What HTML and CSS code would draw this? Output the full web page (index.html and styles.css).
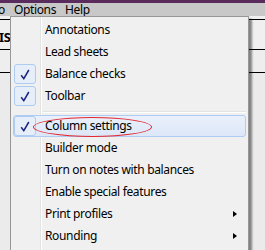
FILE: index.html
```html
<!DOCTYPE html>
<html>
<head>
<meta charset="utf-8">
<link rel="stylesheet" href="styles.css">
</head>
<body>
<div class="screen">
  <div class="titlebar"></div>
  <div class="menubar">
    <span class="mb-item mb-cut">o</span>
    <span class="mb-item">Options</span>
    <span class="mb-item">Help</span>
  </div>
  <div class="app">
    <div class="app-row app-row-first"></div>
    <div class="app-row app-row-tall"><span class="app-label">IS</span></div>
    <div class="app-row app-row-mid"></div>
    <div class="app-row"></div>
  </div>

  <div class="menu">
    <div class="item"><span class="gutter"></span><span class="label">Annotations</span></div>
    <div class="item"><span class="gutter"></span><span class="label">Lead sheets</span></div>
    <div class="item"><span class="gutter check"><svg width="10" height="11" viewBox="0 0 10 11"><path d="M1.2 6.2 L3.8 9.6 L8.8 1" fill="none" stroke="#1a237e" stroke-width="1.5"/></svg></span><span class="label">Balance checks</span></div>
    <div class="item"><span class="gutter check"><svg width="10" height="11" viewBox="0 0 10 11"><path d="M1.2 6.2 L3.8 9.6 L8.8 1" fill="none" stroke="#1a237e" stroke-width="1.5"/></svg></span><span class="label">Toolbar</span></div>
    <div class="sep"></div>
    <div class="item item-hot"><span class="gutter check"><svg width="10" height="11" viewBox="0 0 10 11"><path d="M1.2 6.2 L3.8 9.6 L8.8 1" fill="none" stroke="#1a237e" stroke-width="1.5"/></svg></span><span class="label">Column settings</span></div>
    <div class="item"><span class="gutter"></span><span class="label">Builder mode</span></div>
    <div class="item"><span class="gutter"></span><span class="label">Turn on notes with balances</span></div>
    <div class="item"><span class="gutter"></span><span class="label">Enable special features</span></div>
    <div class="item"><span class="gutter"></span><span class="label">Print profiles</span><span class="arrow"></span></div>
    <div class="item"><span class="gutter"></span><span class="label">Rounding</span><span class="arrow"></span></div>
  </div>

  <div class="annot"></div>
</div>
</body>
</html>
```
FILE: styles.css
```css
html, body {
  margin: 0;
  padding: 0;
}
body {
  font-family: "Noto Sans", "DejaVu Sans", sans-serif;
  font-size: 12px;
  letter-spacing: -0.35px;
  color: #000;
  background: #ebebeb;
}
.screen {
  position: relative;
  width: 265px;
  height: 250px;
  overflow: hidden;
  background: #ebebeb;
}
.titlebar {
  height: 3px;
  background: #5a2c5e;
}
.menubar {
  height: 13px;
  background: #c8c8c8;
  display: flex;
  align-items: center;
  line-height: 13px;
  gap: 9px;
}
.mb-cut {
  margin-left: -2px;
}
.app {
  display: flex;
  flex-direction: column;
}
.app-row {
  border-top: 1px solid #000;
  height: 40px;
}
.app-row-first {
  border-top: none;
  height: 3px;
  background: #f0f0f0;
}
.app-row-tall {
  height: 29px;
  background: #f0f0f0;
  display: flex;
  align-items: center;
}
.app-row-mid {
  height: 22px;
  background: #eeeeee;
}
.app-label {
  font-weight: bold;
  font-size: 13px;
  margin-left: -1px;
  padding-top: 5px;
}

.menu {
  position: absolute;
  left: 10px;
  top: 16px;
  width: 233px;
  height: 240px;
  padding: 2px;
  border: 1px solid #979797;
  background: linear-gradient(to right, #f0f0f0 29px, #e2e3e3 29px, #e2e3e3 30px, #ffffff 30px, #ffffff 31px, #f0f0f0 31px);
  box-shadow: 3px 3px 2px rgba(0, 0, 0, 0.45);
}
.item {
  position: relative;
  display: flex;
  align-items: center;
  height: 22px;
  border: 1px solid transparent;
  border-radius: 3px;
  box-sizing: border-box;
}
.item-hot {
  background: linear-gradient(#eaf1fb, #dce7f7);
  border-color: #aeccf3;
}
.gutter {
  width: 22px;
  height: 20px;
  box-sizing: border-box;
  flex: none;
  display: flex;
  align-items: center;
  justify-content: center;
}
.check {
  border: 1px solid #aecbf0;
  border-radius: 3px;
  background: #e6eefa;
}
.label {
  margin-left: 9px;
  white-space: nowrap;
  line-height: 14px;
}
.arrow {
  position: absolute;
  right: 8px;
  top: 7px;
  width: 0;
  height: 0;
  border-top: 3.5px solid transparent;
  border-bottom: 3.5px solid transparent;
  border-left: 4px solid #000;
}
.sep {
  height: 8px;
  margin-left: 30px;
  background: linear-gradient(#f0f0f0 4px, #e2e3e3 4px, #e2e3e3 5px, #ffffff 5px, #ffffff 6px, #f0f0f0 6px);
}
.annot {
  position: absolute;
  left: 33px;
  top: 117px;
  width: 119px;
  height: 20px;
  border: 1px solid #e3262e;
  border-radius: 50%;
  box-sizing: border-box;
}
```
